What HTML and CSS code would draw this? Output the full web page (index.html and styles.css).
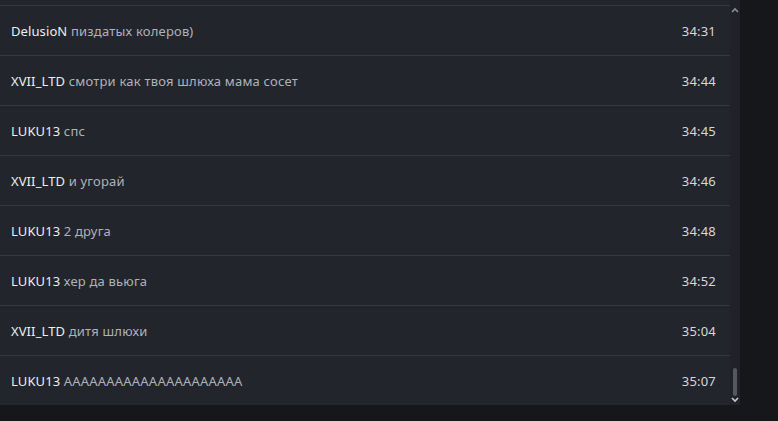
FILE: index.html
```html
<!DOCTYPE html>
<html lang="ru">
<head>
<meta charset="utf-8">
<link rel="stylesheet" href="styles.css">
</head>
<body>
<div class="screen">
  <div class="panel">
    <div class="list">
      <div class="row"><span class="msg"><span class="nick">DelusioN</span> пиздатых колеров)</span><span class="time">34:31</span></div>
      <div class="row"><span class="msg"><span class="nick">XVII_LTD</span> смотри как твоя шлюха мама сосет</span><span class="time">34:44</span></div>
      <div class="row"><span class="msg"><span class="nick">LUKU13</span> спс</span><span class="time">34:45</span></div>
      <div class="row"><span class="msg"><span class="nick">XVII_LTD</span> и угорай</span><span class="time">34:46</span></div>
      <div class="row"><span class="msg"><span class="nick">LUKU13</span> 2 друга</span><span class="time">34:48</span></div>
      <div class="row"><span class="msg"><span class="nick">LUKU13</span> хер да вьюга</span><span class="time">34:52</span></div>
      <div class="row"><span class="msg"><span class="nick">XVII_LTD</span> дитя шлюхи</span><span class="time">35:04</span></div>
      <div class="row"><span class="msg"><span class="nick">LUKU13</span> AAAAAAAAAAAAAAAAAAAAA</span><span class="time">35:07</span></div>
    </div>
    <div class="scrollbar">
      <svg class="arrow" width="8" height="6" viewBox="0 0 8 6"><path d="M1 5 L4 2 L7 5" fill="none" stroke="#8a8d93" stroke-width="1.6"/></svg>
      <div class="track"><div class="thumb"></div></div>
      <svg class="arrow" width="8" height="6" viewBox="0 0 8 6"><path d="M1 1 L4 4 L7 1" fill="none" stroke="#c8cacd" stroke-width="1.6"/></svg>
    </div>
  </div>
</div>
</body>
</html>
```
FILE: styles.css
```css
html, body {
  margin: 0;
  padding: 0;
  background: #16171b;
}
.screen {
  width: 778px;
  height: 421px;
  overflow: hidden;
}
.panel {
  width: 740px;
  height: 405px;
  display: flex;
  background: #22252b;
}
.list {
  width: 730px;
  padding-top: 5px;
  display: flex;
  flex-direction: column;
}
.row {
  height: 49px;
  border-top: 1px solid #34373e;
  display: flex;
  align-items: center;
  justify-content: space-between;
  padding: 1px 14px 0 11px;
  font-family: "Noto Sans", "Open Sans", sans-serif;
  font-size: 13px;
}
.msg {
  color: #aeb3bb;
  letter-spacing: 0.2px;
}
.nick {
  color: #eceef0;
  letter-spacing: 0.1px;
}
.time {
  color: #d6d8db;
  letter-spacing: 0.2px;
}
.scrollbar {
  width: 10px;
  display: flex;
  flex-direction: column;
  align-items: center;
  padding: 7px 0 2px;
  background: #202227;
}
.track {
  flex: 1;
  display: flex;
  flex-direction: column;
  justify-content: flex-end;
  padding-bottom: 1px;
}
.thumb {
  width: 4px;
  height: 28px;
  border-radius: 2px;
  background: #55585e;
}
.arrow {
  display: block;
}
```
